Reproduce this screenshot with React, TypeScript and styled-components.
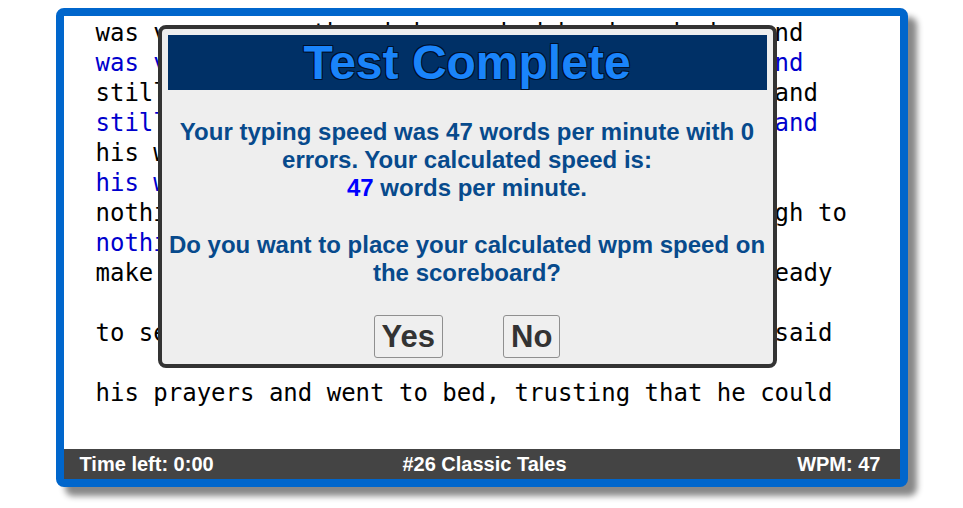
import React from "react";
import styled, { createGlobalStyle } from "styled-components";

const Global = createGlobalStyle`
  html, body { margin: 0; padding: 0; background: #ffffff; }
  body { padding-top: 8px; padding-bottom: 20px; }
`;

const Frame = styled.div`
  box-sizing: border-box;
  width: 852px;
  margin: 0 auto;
  border: 8px solid #0066cc;
  border-radius: 8px;
  background: #ffffff;
  box-shadow: 9px 9px 6px #888888;
  display: flex;
  flex-direction: column;
`;

const TextArea = styled.div`
  position: relative;
  box-sizing: border-box;
  height: 433px;
  padding: 2px 0 0 32px;
  overflow: hidden;
`;

const Line = styled.div<{ $typed?: boolean }>`
  height: 30px;
  line-height: 30px;
  font-family: "DejaVu Sans Mono", monospace;
  font-size: 24px;
  white-space: pre;
  color: ${(p) => (p.$typed ? "#0000cd" : "#000000")};
`;

const StatusBar = styled.div`
  height: 30px;
  background: #444444;
  color: #ffffff;
  font-family: "Liberation Sans", Arial, sans-serif;
  font-weight: bold;
  font-size: 20px;
  display: grid;
  grid-template-columns: 1fr auto 1fr;
  align-items: center;
  padding: 0 19px 0 16px;
`;

const StatusItem = styled.span<{ $align: "start" | "center" | "end" }>`
  justify-self: ${(p) => p.$align};
  padding-left: ${(p) => (p.$align === "center" ? "9px" : "0")};
`;

const Modal = styled.div`
  position: absolute;
  left: 94px;
  top: 9px;
  box-sizing: border-box;
  width: 619px;
  border: 4px solid #333333;
  border-radius: 8px;
  background: #eeeeee;
  padding: 6px;
  font-family: "Liberation Sans", Arial, sans-serif;
  display: flex;
  flex-direction: column;
`;

const Header = styled.div`
  height: 55px;
  background: #003066;
  display: flex;
  align-items: center;
  justify-content: center;
  font-size: 48px;
  font-weight: bold;
  color: #1a84fa;
  text-shadow: -1px -1px 0 #001028, 1px -1px 0 #001028, -1px 1px 0 #001028,
    1px 1px 0 #001028;
`;

const Message = styled.p<{ $gap: number }>`
  margin: ${(p) => p.$gap}px 0 0 0;
  text-align: center;
  font-size: 24px;
  font-weight: bold;
  color: #074a8c;
  line-height: normal;
`;

const Speed = styled.span`
  color: #0000ff;
`;

const ButtonRow = styled.div`
  display: flex;
  justify-content: center;
  gap: 60px;
  margin-top: 28px;
`;

const Button = styled.button`
  box-sizing: border-box;
  height: 43px;
  padding: 0 7px;
  font-family: "Liberation Sans", Arial, sans-serif;
  font-weight: bold;
  font-size: 31px;
  color: #333333;
  background: #efefef;
  border: 1px solid #8f8f8f;
  border-radius: 3px;
  display: inline-flex;
  align-items: center;
`;

const lines: { text: string; typed?: boolean }[] = [
  { text: "was very poor, though he worked hard each day and" },
  { text: "was very poor, though he worked hard each day and", typed: true },
  { text: "still he could never earn enough to live well, and" },
  { text: "still he could never earn enough to live well, and", typed: true },
  { text: "his work was always honest, but at last he had" },
  { text: "his work was always honest, but at last he had", typed: true },
  { text: "nothing left in the world but just leather enough to" },
  { text: "nothing left in the world but just", typed: true },
  { text: "make one pair of shoes. He cut them out to be ready" },
  { text: "", typed: true },
  { text: "to sew in the morning. Then he knelt down, and said" },
  { text: "", typed: true },
  { text: "his prayers and went to bed, trusting that he could" },
  { text: "", typed: true },
];

export default function App() {
  return (
    <>
      <Global />
      <Frame>
        <TextArea>
          {lines.map((l, i) => (
            <Line key={i} $typed={l.typed}>
              {l.text || " "}
            </Line>
          ))}
          <Modal>
            <Header>Test Complete</Header>
            <Message $gap={28}>
              Your typing speed was 47 words per minute with 0 errors. Your
              calculated speed is:
              <br />
              <Speed>47</Speed> words per minute.
            </Message>
            <Message $gap={29}>
              Do you want to place your calculated wpm speed on the scoreboard?
            </Message>
            <ButtonRow>
              <Button>Yes</Button>
              <Button>No</Button>
            </ButtonRow>
          </Modal>
        </TextArea>
        <StatusBar>
          <StatusItem $align="start">Time left: 0:00</StatusItem>
          <StatusItem $align="center">#26 Classic Tales</StatusItem>
          <StatusItem $align="end">WPM: 47</StatusItem>
        </StatusBar>
      </Frame>
    </>
  );
}
